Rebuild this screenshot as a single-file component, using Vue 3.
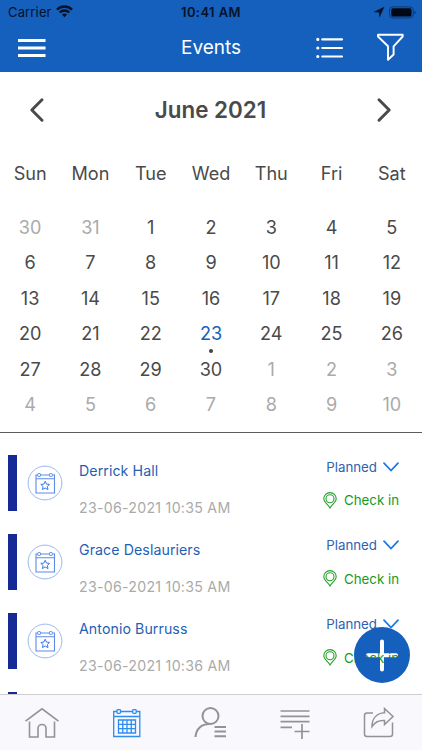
<script setup>
const weekdays = ['Sun', 'Mon', 'Tue', 'Wed', 'Thu', 'Fri', 'Sat']

// Six weeks starting on Sunday, 30 May 2021
const days = Array.from({ length: 42 }, (_, i) => {
  const n = i - 1
  if (n < 1) return { label: n + 31, muted: true }
  if (n > 30) return { label: n - 30, muted: true }
  return { label: n, muted: false, selected: n === 23 }
})

const events = [
  { name: 'Derrick Hall', time: '23-06-2021 10:35 AM' },
  { name: 'Grace Deslauriers', time: '23-06-2021 10:35 AM' },
  { name: 'Antonio Burruss', time: '23-06-2021 10:36 AM' },
]
</script>

<template>
  <div class="screen">
    <header class="top">
      <div class="status">
        <span class="carrier">Carrier</span>
        <svg class="wifi" width="17" height="13" viewBox="0 0 17 13" fill="none" stroke="#061228" stroke-width="2.3">
          <path d="M1 4.6A10.6 10.6 0 0 1 16 4.6" />
          <path d="M3.7 7.5A6.8 6.8 0 0 1 13.3 7.5" />
          <path d="M8.5 12.2 5.9 9.6A3.8 3.8 0 0 1 11.1 9.6Z" fill="#061228" stroke="none" />
        </svg>
        <span class="clock">10:41 AM</span>
        <svg class="battery" width="43" height="13" viewBox="0 0 43 13">
          <path d="M11.4 .8 6.6 11.6 5.8 6.6 .6 6Z" fill="#061228" />
          <rect x="16.6" y=".9" width="23.6" height="11" rx="3" fill="none" stroke="#0c3876" />
          <rect x="18.3" y="2.2" width="20.2" height="8.4" rx="1.6" fill="#000814" />
          <path d="M41.4 4.5q1.3.5 1.3 1.9t-1.3 1.9Z" fill="#0c3876" />
        </svg>
      </div>
      <div class="nav">
        <svg class="menu" width="28" height="20" viewBox="0 0 28 20" fill="#fff">
          <rect y="1" width="27.5" height="3" /><rect y="8.5" width="27.5" height="3" /><rect y="16" width="27.5" height="3" />
        </svg>
        <h1>Events</h1>
        <svg class="list" width="28" height="22" viewBox="0 0 28 22" stroke="#fff" stroke-width="2.2" stroke-linecap="round">
          <path d="M6.3 2.4H26M6.3 11H26M6.3 19.5H26" />
          <path d="M1.8 2.4h.01M1.8 11h.01M1.8 19.5h.01" stroke-width="3.2" />
        </svg>
        <svg class="filter" width="28" height="29" viewBox="0 0 28 29" fill="none" stroke="#fff" stroke-width="1.9" stroke-linejoin="round">
          <path d="M1 1.700H25.700V3.500L16.600 13.300V21.500L11 26.800V13.300L1 3.500Z" />
        </svg>
      </div>
    </header>

    <section class="calendar">
      <div class="month">
        <svg width="16" height="26" viewBox="0 0 16 26"><path d="M13 2.800 2.800 13 13 23.200" /></svg>
        <h2>June 2021</h2>
        <svg width="16" height="26" viewBox="0 0 16 26"><path d="M3 2.800 13.200 13 3 23.200" /></svg>
      </div>
      <div class="grid weekdays">
        <span v-for="d in weekdays" :key="d">{{ d }}</span>
      </div>
      <div class="grid days">
        <span v-for="(d, i) in days" :key="i" :class="{ muted: d.muted, selected: d.selected }">{{ d.label }}</span>
      </div>
    </section>

    <main class="events">
      <article v-for="(e, i) in events" :key="i" class="event">
        <div class="bar"></div>
        <svg class="badge" width="36" height="36" viewBox="0 0 36 36" fill="none" stroke="#5b8be8">
          <circle cx="18" cy="18" r="16.9" stroke="#8fb0f2" stroke-width=".9" />
          <path d="M10.500 10H9V28H27.500V10H25.500M13.500 10H22.500M9 13.800H27.500" stroke-width="1.1" />
          <rect x="10.700" y="8.600" width="2.800" height="2.800" rx=".6" /><rect x="22.500" y="8.600" width="2.800" height="2.800" rx=".6" />
          <path d="m18.200 16.200 1.300 2.900 3.100.3-2.300 2.100.7 3.100-2.800-1.600-2.800 1.600.7-3.100-2.300-2.100 3.100-.3Z" stroke="#3c78f0" />
        </svg>
        <div class="details">
          <span class="name">{{ e.name }}</span>
          <span class="time">{{ e.time }}</span>
        </div>
        <div class="actions">
          <div class="planned">
            <span>Planned</span>
            <svg width="16" height="10" viewBox="0 0 16 10" fill="none" stroke="#1878e6" stroke-width="1.7" stroke-linecap="round"><path d="M1 1.200 8 8.500 15 1.200" /></svg>
          </div>
          <div class="checkin">
            <svg width="14" height="17" viewBox="0 0 14 17" fill="none" stroke="#27a22d" stroke-width="1.1">
              <path d="M7 15.900C5.500 12.800.8 10.200.8 6.700a6.200 6.100 0 0 1 12.400 0C13.200 10.200 8.500 12.800 7 15.900Z" /><circle cx="7" cy="6.700" r="4" />
            </svg>
            <span>Check in</span>
          </div>
        </div>
      </article>
      <div class="event"><div class="bar"></div></div>
    </main>

    <!-- The plus is an opening in the disc, so the list shows through it -->
    <svg class="fab" width="56" height="56" viewBox="0 0 56 56">
      <path fill="#1560bd" fill-rule="evenodd" d="M28 0a28 28 0 1 1 0 56a28 28 0 1 1 0-56ZM26 14.500V26.200H14a2 2 0 0 0 0 4H26V42.500a2 2 0 0 0 4 0V30.200H42a2 2 0 0 0 0-4H30V14.500a2 2 0 0 0-4 0Z" />
    </svg>

    <nav class="tabs">
      <svg width="34" height="32" viewBox="0 0 34 32" fill="none" stroke="#929297" stroke-width="1.6">
        <path d="M.5 14.200 17 1.800 33.500 14.200M4.500 14.500V30H13V21.500a4 4 0 0 1 8 0V30H29.500V14.500" />
      </svg>
      <svg width="34" height="32" viewBox="0 0 34 32" fill="none" stroke="#2e8cf0" stroke-width="1.3">
        <path d="M7 4.500H3.700V29.500H29.800V4.500H26.500M10.500 4.500H22.500M3.700 9.500H29.800" />
        <rect x="7" y="2.700" width="3.500" height="3.600" rx=".8" /><rect x="22.700" y="2.700" width="3.500" height="3.600" rx=".8" />
        <path d="M8.500 13H25.500V26H8.500ZM12.750 13V26M17 13V26M21.250 13V26M8.500 17.300H25.500M8.500 21.700H25.500" />
      </svg>
      <svg width="34" height="32" viewBox="0 0 34 32" fill="none" stroke="#929297" stroke-width="2">
        <circle cx="16.500" cy="9" r="8" /><path d="M1.500 30C2 22 7.500 17 15.500 17M20.500 20H32M20.500 24.600H32M20.500 29.300H32" />
      </svg>
      <svg width="34" height="32" viewBox="0 0 34 32" fill="none" stroke="#929297" stroke-width="1.7">
        <path d="M2.500 4H31.500M2.500 9.400H31.500M2.500 14.700H31.500M2.500 20.300H14M16.500 24.500H31.500M24 17V32" />
      </svg>
      <svg width="34" height="32" viewBox="0 0 34 32" fill="none" stroke="#929297" stroke-width="1.5">
        <path d="M10 6H4Q1.500 6 1.500 8.500V27Q1.500 29.500 4 29.500H27Q29.500 29.500 29.500 27V15.500" />
        <path d="M21.500 1.500 30 9.500 21.500 17.500V13.500C16 13 12 15 9 19.500C9 11 14 6.300 21.500 5.800Z" />
      </svg>
    </nav>
  </div>
</template>

<style>
body { background: #fff; }
</style>

<style scoped>
.screen { position: relative; width: 422px; height: 750px; overflow: hidden; display: flex; flex-direction: column; background: #fff; font-family: Inter, "Liberation Sans", sans-serif; color: #4a4a4a; }
.top { flex: none; height: 72px; background: #1560bd; }
.status { display: grid; grid-template-columns: 48px 125px 76px 1fr 43px; height: 24px; align-items: center; padding: 0 6px 0 8px; color: #061228; font-size: 13px; letter-spacing: .15px; line-height: 24px; }
.wifi { margin-top: -1px; }
.clock { font-weight: 600; letter-spacing: .4px; white-space: nowrap; }
.battery { grid-column: 5; }
.nav { display: grid; grid-template-columns: 163px 1fr 61px 28px; align-items: center; height: 46px; padding: 0 17px 0 18px; color: #fff; }
h1 { margin: 0; padding-top: 1px; font-size: 19px; font-weight: 400; line-height: 46px; }
.calendar { flex: none; height: 360px; border-bottom: 1px solid #5c5c60; box-sizing: content-box; }
.month { display: flex; justify-content: space-between; align-items: center; height: 75px; padding: 0 30px 0 29px; }
.month svg { fill: none; stroke: #4a4a4a; stroke-width: 3; stroke-linecap: round; stroke-linejoin: round; }
h2 { margin: 0; font-size: 22.400px; font-weight: 600; }
.grid { display: grid; grid-template-columns: repeat(7, 1fr); text-align: center; font-size: 18.100px; }
.weekdays { line-height: 53px; height: 62px; }
.days { grid-auto-rows: 35.400px; line-height: 36px; }
.days span { position: relative; }
.days .muted { color: #aaa; }
.days .selected { color: #1560bd; }
.selected::after { content: ""; position: absolute; left: calc(50% - 2px); bottom: -2px; width: 4px; height: 4px; border-radius: 50%; background: #444; }
.events { flex: 1; min-height: 0; overflow: hidden; padding: 22.200px 23px 0 8px; }
.event { display: grid; grid-template-columns: 9px 46px 1fr 76px; height: 78.800px; }
.bar { height: 56px; background: #142b96; }
.badge { margin: 10px 0 0 10px; }
.details { margin-left: 16px; display: flex; flex-direction: column; font-size: 14.200px; white-space: nowrap; }
.name { height: 37px; line-height: 32px; letter-spacing: .07px; color: #1f5fb5; }
.time { line-height: 32px; letter-spacing: .26px; color: #aaa; }
.actions { font-size: 13.300px; white-space: nowrap; }
.actions svg { flex: none; }
.planned, .checkin { display: flex; align-items: center; justify-content: flex-end; }
.planned { height: 23px; gap: 6px; color: #2e62b3; }
.checkin { height: 44px; gap: 7px; color: #159b1d; }
.fab { position: absolute; left: 354px; top: 627px; }
.tabs { flex: none; box-sizing: border-box; height: 56px; display: grid; grid-template-columns: repeat(5, 1fr); justify-items: center; align-items: center; border-top: 1px solid #cfccd0; background: #f9f8fd; }
</style>
